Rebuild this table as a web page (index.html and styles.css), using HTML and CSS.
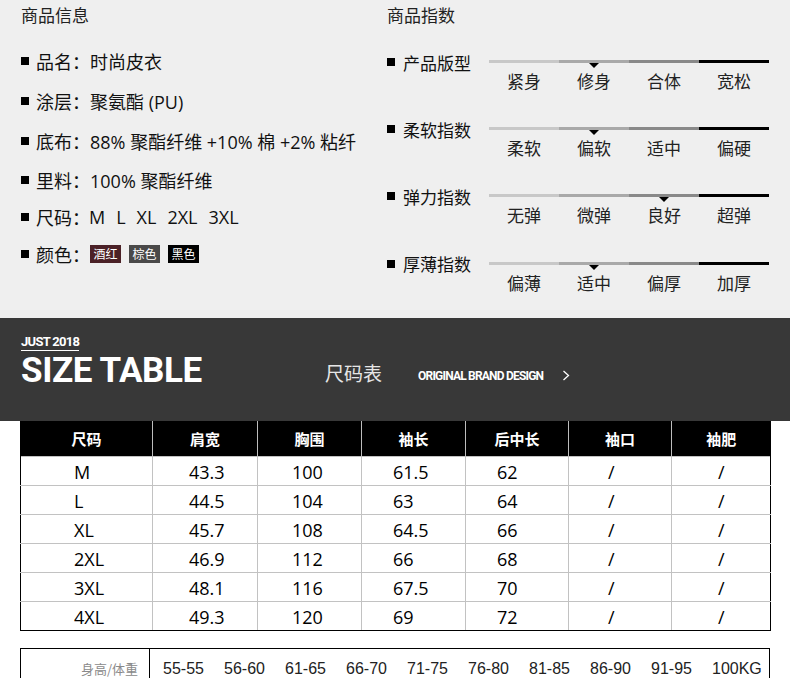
FILE: index.html
```html
<!DOCTYPE html>
<html lang="zh-CN">
<head>
<meta charset="utf-8">
<title>尺码表</title>
<link rel="stylesheet" href="styles.css">
</head>
<body>
<div class="top">
  <section class="info">
    <h2 class="title">商品信息</h2>
    <ul class="list">
      <li><i class="sq"></i>品名：时尚皮衣</li>
      <li><i class="sq"></i>涂层：聚氨酯 (PU)</li>
      <li><i class="sq"></i>底布：88% 聚酯纤维 +10% 棉 +2% 粘纤</li>
      <li><i class="sq"></i>里料：100% 聚酯纤维</li>
      <li><i class="sq"></i>尺码：<span class="sizes"><span>M</span><span>L</span><span>XL</span><span>2XL</span><span>3XL</span></span></li>
      <li><i class="sq"></i>颜色：<span class="tags"><span class="tag wine">酒红</span><span class="tag brown">棕色</span><span class="tag black">黑色</span></span></li>
    </ul>
  </section>
  <section class="index">
    <h2 class="title">商品指数</h2>
    <div class="irow">
      <div class="ilabel"><i class="sq"></i>产品版型</div>
      <div class="scale">
        <div class="seg s1"><span>紧身</span></div>
        <div class="seg s2 on"><span>修身</span></div>
        <div class="seg s3"><span>合体</span></div>
        <div class="seg s4"><span>宽松</span></div>
      </div>
    </div>
    <div class="irow">
      <div class="ilabel"><i class="sq"></i>柔软指数</div>
      <div class="scale">
        <div class="seg s1"><span>柔软</span></div>
        <div class="seg s2 on"><span>偏软</span></div>
        <div class="seg s3"><span>适中</span></div>
        <div class="seg s4"><span>偏硬</span></div>
      </div>
    </div>
    <div class="irow">
      <div class="ilabel"><i class="sq"></i>弹力指数</div>
      <div class="scale">
        <div class="seg s1"><span>无弹</span></div>
        <div class="seg s2"><span>微弹</span></div>
        <div class="seg s3 on"><span>良好</span></div>
        <div class="seg s4"><span>超弹</span></div>
      </div>
    </div>
    <div class="irow">
      <div class="ilabel"><i class="sq"></i>厚薄指数</div>
      <div class="scale">
        <div class="seg s1"><span>偏薄</span></div>
        <div class="seg s2 on"><span>适中</span></div>
        <div class="seg s3"><span>偏厚</span></div>
        <div class="seg s4"><span>加厚</span></div>
      </div>
    </div>
  </section>
</div>

<div class="banner">
  <div class="brand">
    <div class="just">JUST 2018</div>
    <div class="big">SIZE TABLE</div>
  </div>
  <div class="cn">尺码表</div>
  <div class="orig">ORIGINAL BRAND DESIGN</div>
  <svg class="chev" width="8" height="11" viewBox="0 0 8 11"><path d="M1.5 1 L6.5 5.5 L1.5 10" fill="none" stroke="#fff" stroke-width="1.3"/></svg>
</div>

<table class="size">
  <colgroup>
    <col style="width:132px"><col style="width:105px"><col style="width:104px"><col style="width:104px"><col style="width:103px"><col style="width:103px"><col style="width:99px">
  </colgroup>
  <thead>
    <tr><th>尺码</th><th>肩宽</th><th>胸围</th><th>袖长</th><th>后中长</th><th>袖口</th><th>袖肥</th></tr>
  </thead>
  <tbody>
    <tr><td>M</td><td>43.3</td><td>100</td><td>61.5</td><td>62</td><td>/</td><td>/</td></tr>
    <tr><td>L</td><td>44.5</td><td>104</td><td>63</td><td>64</td><td>/</td><td>/</td></tr>
    <tr><td>XL</td><td>45.7</td><td>108</td><td>64.5</td><td>66</td><td>/</td><td>/</td></tr>
    <tr><td>2XL</td><td>46.9</td><td>112</td><td>66</td><td>68</td><td>/</td><td>/</td></tr>
    <tr><td>3XL</td><td>48.1</td><td>116</td><td>67.5</td><td>70</td><td>/</td><td>/</td></tr>
    <tr><td>4XL</td><td>49.3</td><td>120</td><td>69</td><td>72</td><td>/</td><td>/</td></tr>
  </tbody>
</table>

<div class="fit">
  <div class="fit-label">身高/体重</div>
  <div class="fit-vals">
    <span>55-55</span><span>56-60</span><span>61-65</span><span>66-70</span><span>71-75</span><span>76-80</span><span>81-85</span><span>86-90</span><span>91-95</span><span>100KG</span>
  </div>
</div>
</body>
</html>
```

FILE: styles.css
```css
* { box-sizing: border-box; }
html, body { margin: 0; padding: 0; }
body {
  width: 790px;
  background: #fff;
  color: #111;
  font-family: "Open Sans", "Noto Sans CJK SC", sans-serif;
}

/* ---------- top ---------- */
.top {
  display: flex;
  height: 318px;
  background: #efefef;
}
.info { width: 387px; padding-left: 21px; }
.index { width: 403px; }
.title {
  margin: 0;
  font-weight: normal;
  font-size: 17px;
  line-height: 30px;
  font-family: "Noto Sans CJK SC", sans-serif;
  color: #222;
}
.sq {
  display: inline-block;
  width: 8px;
  height: 8px;
  background: #000;
  flex: none;
}
.list {
  list-style: none;
  margin: 11px 0 0;
  padding: 0;
}
.list li {
  display: flex;
  align-items: center;
  height: 40px;
  font-size: 18px;
  white-space: nowrap;
}
.list li:nth-child(n+4) { height: 37px; }
.list li .sq { margin-right: 7px; }
.sizes { display: inline-flex; gap: 11px; margin-left: -1px; }
.tags { display: inline-flex; gap: 8px; margin-left: 0; }
.tag {
  display: inline-flex;
  align-items: center;
  justify-content: center;
  width: 31px;
  height: 18px;
  font-size: 12px;
  color: #fff;
  font-family: "Noto Sans CJK SC", sans-serif;
}
.tag.wine { background: #4b2127; }
.tag.brown { background: #4a4949; }
.tag.black { background: #000; }

.irow {
  display: flex;
  height: 67.2px;
}
.irow:first-of-type { margin-top: 20px; }
.ilabel {
  width: 102px;
  display: flex;
  align-items: center;
  height: 24px;
  font-size: 17px;
  font-family: "Noto Sans CJK SC", sans-serif;
}
.ilabel .sq { margin-right: 8px; }
.scale {
  display: flex;
  width: 280px;
  margin-top: 10px;
  align-self: flex-start;
}
.seg {
  position: relative;
  width: 70px;
  border-top: 3px solid #c8c8c8;
  text-align: center;
  padding-top: 8px;
  font-size: 17px;
  line-height: 20px;
  font-family: "Noto Sans CJK SC", sans-serif;
  color: #222;
}
.seg.s2 { border-top-color: #a9a9a9; }
.seg.s3 { border-top-color: #898989; }
.seg.s4 { border-top-color: #000; }
.seg.on::after {
  content: "";
  position: absolute;
  top: 0;
  left: 50%;
  margin-left: -5px;
  border-left: 5px solid transparent;
  border-right: 5px solid transparent;
  border-top: 5px solid #000;
}

/* ---------- banner ---------- */
.banner {
  display: flex;
  align-items: flex-start;
  height: 103px;
  background: #383838;
  color: #fff;
  padding-left: 21px;
}
.brand { width: 304px; padding-top: 11px; }
.just {
  display: inline-block;
  font-family: Roboto, sans-serif;
  font-weight: 700;
  font-size: 13px;
  line-height: 14px;
  letter-spacing: -0.7px;
  padding-bottom: 1px;
  border-bottom: 1px solid #fff;
}
.big {
  font-family: Roboto, sans-serif;
  font-weight: 700;
  font-size: 35px;
  line-height: 36px;
  margin-top: 2px;
  letter-spacing: -0.4px;
}
.cn {
  margin-top: 45px;
  font-family: "Noto Sans CJK SC", sans-serif;
  font-size: 19px;
  line-height: 20px;
  color: #e6e6e6;
}
.orig {
  margin-top: 51px;
  margin-left: 36px;
  font-family: Roboto, sans-serif;
  font-weight: 700;
  font-size: 12px;
  line-height: 14px;
  letter-spacing: -0.8px;
}
.chev { margin-top: 52px; margin-left: 19px; }

/* ---------- size table ---------- */
.size {
  border-collapse: collapse;
  table-layout: fixed;
  width: 750px;
  margin-left: 20px;
}
.size th {
  height: 35px;
  background: #000;
  color: #fff;
  font-family: "Noto Sans CJK SC", sans-serif;
  font-weight: 700;
  font-size: 15px;
  text-align: center;
  padding: 0;
  border-left: 1px solid #bdbdbd;
}
.size th:first-child { border-left: 1px solid #000; }
.size td {
  height: 29px;
  padding: 3px 0 0;
  font-size: 18px;
  line-height: 24px;
  text-align: left;
  border: 1px solid #c2c2c2;
  color: #000;
}
.size td:first-child { border-left-color: #000; padding-left: 53px; }
.size td:nth-child(2) { padding-left: 36px; }
.size td:nth-child(3) { padding-left: 34px; }
.size td:nth-child(4) { padding-left: 31px; }
.size td:nth-child(5) { padding-left: 31px; }
.size td:nth-child(6) { padding-left: 39px; }
.size td:nth-child(7) { padding-left: 46px; border-right-color: #000; }
.size tr:last-child td { border-bottom-color: #000; }

/* ---------- fit row ---------- */
.fit {
  display: flex;
  width: 750px;
  height: 42px;
  margin: 17px 0 0 20px;
  border: 1px solid #000;
  border-bottom: none;
}
.fit-label {
  width: 129px;
  border-right: 1px solid #000;
  text-align: right;
  padding-right: 11px;
  font-family: "Noto Sans CJK SC", sans-serif;
  font-size: 13px;
  line-height: 40px;
  color: #8a8a8a;
}
.fit-vals {
  display: grid;
  grid-template-columns: repeat(9, 61px) auto;
  padding-left: 13px;
  font-family: "Liberation Sans", Arial, sans-serif;
  font-size: 16px;
  line-height: 40px;
  color: #222;
}
```
